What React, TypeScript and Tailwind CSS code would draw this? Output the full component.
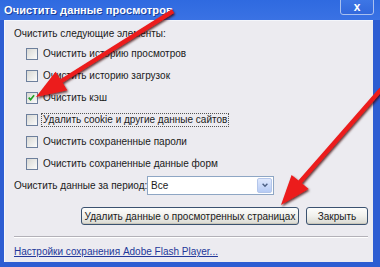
import React from "react";

function Box({ checked }: { checked?: boolean }) {
  return (
    <span className="relative flex w-[12px] h-[12px] shrink-0 border border-[#6d7f9c] bg-gradient-to-br from-[#d8d8d4] to-[#fbfbfb]">
      {checked && (
        <svg viewBox="0 0 12 12" className="absolute left-0 top-0 w-[10px] h-[10px]">
          <path d="M2 5.5 L4.3 8 L8.5 2.6" fill="none" stroke="#21a121" strokeWidth="2" />
        </svg>
      )}
    </span>
  );
}

function Row({ label, checked, focus }: { label: string; checked?: boolean; focus?: boolean }) {
  return (
    <div className="h-[22px] flex items-center pl-[12px] gap-[3px]">
      <Box checked={checked} />
      <span
        className={
          focus
            ? "px-[1px] leading-[12px] border border-dotted border-[#555]"
            : "px-[1px] leading-[12px] border border-transparent"
        }
      >
        {label}
      </span>
    </div>
  );
}

function Btn({ children, w }: { children: React.ReactNode; w: string }) {
  return (
    <div
      className={`${w} h-[18px] flex items-center justify-center whitespace-nowrap rounded-[3px] border border-[#3b5270] bg-gradient-to-b from-[#fdfdfc] via-[#f0f0ec] to-[#d9d9d2] shadow-[inset_0_-1px_0_#c9c6ba]`}
    >
      {children}
    </div>
  );
}

export default function App() {
  return (
    <div className="w-[380px] h-[267px] relative overflow-hidden bg-[#2a5bd2] flex flex-col font-['Liberation_Sans',sans-serif] text-[10px] text-[#1a1a1a] whitespace-nowrap">
      {/* title bar */}
      <div className="h-[20px] shrink-0 relative flex items-center bg-gradient-to-b from-[#2f6ae0] to-[#3a72e4]">
        <span className="pl-[4px] text-white font-bold text-[11px] tracking-[0.1px] [text-shadow:1px_1px_0_#1a3f9a]">
          Очистить данные просмотров
        </span>
        <div className="absolute right-[6px] top-[-3px] w-[34px] h-[18px] rounded-[3px] border border-[#a9c0ef] bg-gradient-to-b from-[#3f78e6] to-[#3268dc] flex items-center justify-center">
          <span className="text-white font-bold text-[12px] leading-none mt-[1px]">x</span>
        </div>
      </div>
      {/* frame */}
      <div className="flex-1 pl-[4px] pr-[7px] pb-[5px] bg-[#2d5dd2]">
        <div className="h-full bg-[#ecebf0] border-l border-t border-[#f4f6fb] pl-[9px] pr-[5px] pt-[6px] flex flex-col">
          <div className="h-[14px] leading-[14px]">Очистить следующие элементы:</div>
          <div className="mt-[2px] flex flex-col">
            <Row label="Очистить историю просмотров" />
            <Row label="Очистить историю загрузок" />
            <Row label="Очистить кэш" checked />
            <Row label="Удалить cookie и другие данные сайтов" focus />
            <Row label="Очистить сохраненные пароли" />
            <Row label="Очистить сохраненные данные форм" />
          </div>
          <div className="h-[20px] flex items-center">
            <span className="w-[133px]">Очистить данные за период:</span>
            <div className="w-[127px] h-[19px] bg-white border border-[#8ea6c4] flex items-center justify-between">
              <span className="pl-[3px]">Все</span>
              <div className="w-[15px] h-[15px] mr-[1px] rounded-[2px] border border-[#b4c6ea] bg-gradient-to-b from-[#dfe8fc] to-[#b6cbf5] flex items-center justify-center">
                <svg viewBox="0 0 10 10" className="w-[8px] h-[8px]">
                  <path d="M2 3.5 L5 6.5 L8 3.5" fill="none" stroke="#4d6185" strokeWidth="1.8" />
                </svg>
              </div>
            </div>
          </div>
          <div className="mt-[12px] flex justify-end gap-[7px]">
            <Btn w="w-[218px]">Удалить данные о просмотренных страницах</Btn>
            <Btn w="w-[62px]">Закрыть</Btn>
          </div>
          <div className="mt-[11px] h-[2px] border-t border-[#b3b1b8] border-b border-b-white" />
          <div className="mt-[7px] h-[14px] leading-[14px] text-[#23389a] underline">
            Настройки сохранения Adobe Flash Player...
          </div>
        </div>
      </div>
      {/* arrows overlay */}
      <svg className="absolute inset-0 pointer-events-none" width="380" height="267" viewBox="0 0 380 267">
        <defs>
          <filter id="sh" x="-20%" y="-20%" width="140%" height="140%">
            <feDropShadow dx="1" dy="1.5" stdDeviation="0.9" floodColor="#3a0606" floodOpacity="0.8" />
          </filter>
        </defs>
        <polygon
          filter="url(#sh)"
          fill="#ec1b1b"
          points="174.2,12.9 62.6,82.8 67.3,90.3 36,97 55.6,71.7 60.3,79.3 171.8,9.2"
        />
        <polygon
          filter="url(#sh)"
          fill="#ec1b1b"
          points="383,90.5 301.8,183.3 308.6,188.9 281,205 291.6,174.9 298.4,180.5 379.6,87.7"
        />
      </svg>
    </div>
  );
}
